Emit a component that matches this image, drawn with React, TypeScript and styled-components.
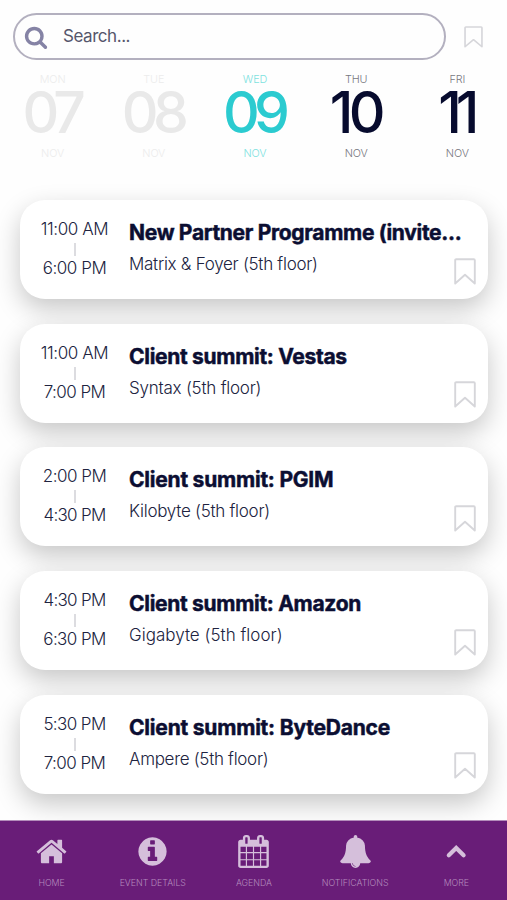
import React from "react";
import styled, { createGlobalStyle } from "styled-components";

const Global = createGlobalStyle`
  * { box-sizing: border-box; }
  body { margin: 0; background: #fefefe; font-family: Inter, "Open Sans", sans-serif; color: #0b0e32; }
`;

const Screen = styled.div`
  width: 507px;
  height: 900px;
  display: flex;
  flex-direction: column;
  overflow: hidden;
`;

const Header = styled.header`
  display: flex;
  align-items: center;
  padding: 13px 24px 0 13px;
  justify-content: space-between;
`;

const SearchBox = styled.label`
  width: 433px;
  height: 47px;
  border: 2px solid #b3b0bf;
  border-radius: 24px;
  display: flex;
  align-items: center;
  padding-left: 9px;
  gap: 15px;
  color: #8583a5;
`;

const SearchText = styled.span`
  font-size: 17px;
  line-height: 22px;
  margin-top: -2px;
  color: #55566b;
  letter-spacing: -0.45px;
`;

const Dates = styled.nav`
  display: grid;
  grid-template-columns: repeat(5, 101.2px);
  height: 140px;
  padding-top: 12px;
  margin-left: 2px;
  flex: none;
`;

const Day = styled.div<{ $number: string; $label: string }>`
  display: flex;
  flex-direction: column;
  align-items: center;
  color: ${(p) => p.$number};
  small {
    font-size: 10.8px;
    line-height: 16px;
    font-weight: 300;
    letter-spacing: -0.1px;
    color: ${(p) => p.$label};
  }
`;

const DayNumber = styled.strong<{ $spacing: number }>`
  font-size: 57px;
  line-height: 50px;
  margin-bottom: 8px;
  font-weight: 500;
  letter-spacing: ${(p) => p.$spacing}px;
  margin-right: ${(p) => -p.$spacing - 3}px;
`;

const List = styled.main`
  display: flex;
  flex-direction: column;
  gap: 24.6px;
  padding: 0 19px 0 20px;
  height: 621px;
  flex: none;
`;

const Card = styled.article`
  height: 99.1px;
  flex: none;
  border-radius: 25px;
  background: #fff;
  box-shadow: 0 10px 26px rgba(0, 0, 0, 0.22);
  display: grid;
  grid-template-columns: 109px minmax(0, 1fr) 34.5px;
`;

const Times = styled.div`
  display: flex;
  flex-direction: column;
  align-items: center;
  padding-top: 18px;
`;

const Time = styled.span<{ $spacing: number }>`
  font-size: 17px;
  line-height: 22px;
  font-weight: 300;
  white-space: nowrap;
  color: #202340;
  letter-spacing: ${(p) => p.$spacing}px;
`;

const Divider = styled.i`
  width: 2px;
  height: 13px;
  margin: 3px 0 1px;
  background: #dcdce0;
`;

const Info = styled.div`
  padding-top: 20px;
  white-space: nowrap;
`;

const Title = styled.h2<{ $spacing: number }>`
  margin: 0;
  font-size: 21px;
  line-height: 26px;
  font-weight: 700;
  -webkit-text-stroke: 0.5px #0b0e32;
  letter-spacing: ${(p) => p.$spacing}px;
`;

const Place = styled.p<{ $spacing: number }>`
  margin: 7px 0 0;
  font-size: 17px;
  line-height: 22px;
  font-weight: 300;
  color: #202340;
  letter-spacing: ${(p) => p.$spacing}px;
`;

const Save = styled.div`
  padding-top: 57.5px;
  line-height: 0;
`;

const NavBar = styled.footer`
  height: 79px;
  flex: none;
  background: #691d78;
  box-shadow: 0 -1px 0 #b48dbb;
  display: grid;
  grid-template-columns: repeat(5, 101.2px);
  padding-left: 1px;
`;

const NavItem = styled.a`
  display: flex;
  flex-direction: column;
  align-items: center;
  padding-top: 14px;
  color: #d5bfdb;
  svg {
    height: 33px;
  }
  span {
    font-size: 8.8px;
    line-height: 12px;
    margin-top: 9px;
    font-weight: 300;
    color: #b48bbd;
    white-space: nowrap;
  }
`;

const Bookmark = ({ w = 22, h = 27 }: { w?: number; h?: number }) => (
  <svg width={w} height={h} viewBox="0 0 22 27" preserveAspectRatio="none" fill="none" stroke="#d6d6da" strokeWidth="1.9" strokeLinejoin="round">
    <path d="M1.2 2.2Q1.2 1.2 2.2 1.2H19.8Q20.8 1.2 20.8 2.2V25.5L11 16.8L1.2 25.5Z" />
  </svg>
);

const glyphs = {
  search:
    "M1216 832q0-185-131.5-316.5t-316.5-131.5-316.5 131.5-131.5 316.5 131.5 316.5 316.5 131.5 316.5-131.5 131.5-316.5zm512 832q0 52-38 90t-90 38q-54 0-90-38l-343-342q-179 124-399 124-143 0-273.5-55.5t-225-150-150-225-55.5-273.5 55.5-273.5 150-225 225-150 273.5-55.5 273.5 55.5 225 150 150 225 55.5 273.5q0 220-124 399l343 343q37 37 37 90z",
  home: "M1472 992v480q0 26-19 45t-45 19h-384v-384h-256v384h-384q-26 0-45-19t-19-45v-480q0-1 .5-3t.5-3l575-474 575 474q1 2 1 6zm223-69l-62 74q-8 9-21 11h-3q-13 0-21-7l-692-577-692 577q-12 8-24 7-13-2-21-11l-62-74q-8-10-7-23.5t11-21.5l719-599q32-26 76-26t76 26l244 204v-195q0-14 9-23t23-9h192q14 0 23 9t9 23v408l219 182q10 8 11 21.5t-7 23.5z",
  info: "M1152 1376v-160q0-14-9-23t-23-9h-96v-512q0-14-9-23t-23-9h-320q-14 0-23 9t-9 23v160q0 14 9 23t23 9h96v320h-96q-14 0-23 9t-9 23v160q0 14 9 23t23 9h448q14 0 23-9t9-23zm-128-896v-160q0-14-9-23t-23-9h-192q-14 0-23 9t-9 23v160q0 14 9 23t23 9h192q14 0 23-9t9-23zm640 416q0 209-103 385.5t-279.5 279.5-385.5 103-385.5-103-279.5-279.5-103-385.5 103-385.5 279.5-279.5 385.5-103 385.5 103 279.5 279.5 103 385.5z",
  calendar:
    "M192 1664h288v-288h-288v288zm352 0h320v-288h-320v288zm-352-352h288v-320h-288v320zm352 0h320v-320h-320v320zm-352-384h288v-288h-288v288zm736 736h320v-288h-320v288zm-384-736h320v-288h-320v288zm768 736h288v-288h-288v288zm-384-352h320v-320h-320v320zm-352-864v-288q0-13-9.5-22.5t-22.5-9.5h-64q-13 0-22.5 9.5t-9.5 22.5v288q0 13 9.5 22.5t22.5 9.5h64q13 0 22.5-9.5t9.5-22.5zm736 864h288v-320h-288v320zm-384-384h320v-288h-320v288zm384 0h288v-288h-288v288zm32-480v-288q0-13-9.5-22.5t-22.5-9.5h-64q-13 0-22.5 9.5t-9.5 22.5v288q0 13 9.5 22.5t22.5 9.5h64q13 0 22.5-9.5t9.5-22.5zm384-64v1280q0 52-38 90t-90 38h-1408q-52 0-90-38t-38-90v-1280q0-52 38-90t90-38h128v-96q0-66 47-113t113-47h64q66 0 113 47t47 113v96h384v-96q0-66 47-113t113-47h64q66 0 113 47t47 113v96h128q52 0 90 38t38 90z",
  bell: "M912 1696q0-16-16-16-59 0-101.5-42.5t-42.5-101.5q0-16-16-16t-16 16q0 73 51.5 124.5t124.5 51.5q16 0 16-16zm816-288q0 52-38 90t-90 38h-448q0 106-75 181t-181 75-181-75-75-181h-448q-52 0-90-38t-38-90q50-42 91-88t85-119.5 74.5-158.5 50-206 19.5-260q0-152 117-282.5t307-158.5q-8-19-8-39 0-40 28-68t68-28 68 28 28 68q0 20-8 39 190 28 307 158.5t117 282.5q0 139 19.5 260t50 206 74.5 158.5 85 119.5 91 88z",
};

const Glyph = ({ name, size }: { name: keyof typeof glyphs; size: number }) => (
  <svg width={size} height={size} viewBox="0 0 1792 1792" fill="currentColor">
    <path d={glyphs[name]} />
  </svg>
);

const ChevronUp = () => (
  <svg width="34" height="33" viewBox="0 0 34 33" fill="none" stroke="currentColor" strokeWidth="4.2" strokeLinecap="round" strokeLinejoin="miter">
    <path d="M9.8 20.2L17.2 13L24.6 20.2" />
  </svg>
);

const days = [
  { d: "MON", n: "07", c: "#e9e9e9", l: "#ececec", s: -5 },
  { d: "TUE", n: "08", c: "#e9e9e9", l: "#ececec", s: -5.5 },
  { d: "WED", n: "09", c: "#2bcbd0", l: "#7de2df", s: -6 },
  { d: "THU", n: "10", c: "#070b2e", l: "#77777f", s: -4.5 },
  { d: "FRI", n: "11", c: "#070b2e", l: "#77777f", s: -6 },
];

const events = [
  { from: "11:00 AM", to: "6:00 PM", title: "New Partner Programme (invite...", place: "Matrix & Foyer (5th floor)", f: -0.4, t: -0.45, ts: -0.3, ps: -0.28 },
  { from: "11:00 AM", to: "7:00 PM", title: "Client summit: Vestas", place: "Syntax (5th floor)", f: -0.4, t: -0.55, ts: -0.3, ps: -0.23 },
  { from: "2:00 PM", to: "4:30 PM", title: "Client summit: PGIM", place: "Kilobyte (5th floor)", f: -0.5, t: -0.7, ts: -0.22, ps: -0.27 },
  { from: "4:30 PM", to: "6:30 PM", title: "Client summit: Amazon", place: "Gigabyte (5th floor)", f: -0.7, t: -0.6, ts: -0.3, ps: 0.02 },
  { from: "5:30 PM", to: "7:00 PM", title: "Client summit: ByteDance", place: "Ampere (5th floor)", f: -0.6, t: -0.55, ts: -0.2, ps: -0.3 },
];

export default function App() {
  return (
    <Screen>
      <Global />
      <Header>
        <SearchBox>
          <Glyph name="search" size={24} />
          <SearchText>Search...</SearchText>
        </SearchBox>
        <Bookmark w={19} h={22} />
      </Header>
      <Dates>
        {days.map((d) => (
          <Day key={d.n} $number={d.c} $label={d.l}>
            <small>{d.d}</small>
            <DayNumber $spacing={d.s}>{d.n}</DayNumber>
            <small>NOV</small>
          </Day>
        ))}
      </Dates>
      <List>
        {events.map((e) => (
          <Card key={e.title}>
            <Times>
              <Time $spacing={e.f}>{e.from}</Time>
              <Divider />
              <Time $spacing={e.t}>{e.to}</Time>
            </Times>
            <Info>
              <Title $spacing={e.ts}>{e.title}</Title>
              <Place $spacing={e.ps}>{e.place}</Place>
            </Info>
            <Save>
              <Bookmark />
            </Save>
          </Card>
        ))}
      </List>
      <NavBar>
        <NavItem>
          <Glyph name="home" size={33} />
          <span>HOME</span>
        </NavItem>
        <NavItem>
          <Glyph name="info" size={33} />
          <span>EVENT DETAILS</span>
        </NavItem>
        <NavItem>
          <Glyph name="calendar" size={33} />
          <span>AGENDA</span>
        </NavItem>
        <NavItem>
          <Glyph name="bell" size={33} />
          <span>NOTIFICATIONS</span>
        </NavItem>
        <NavItem>
          <ChevronUp />
          <span>MORE</span>
        </NavItem>
      </NavBar>
    </Screen>
  );
}
